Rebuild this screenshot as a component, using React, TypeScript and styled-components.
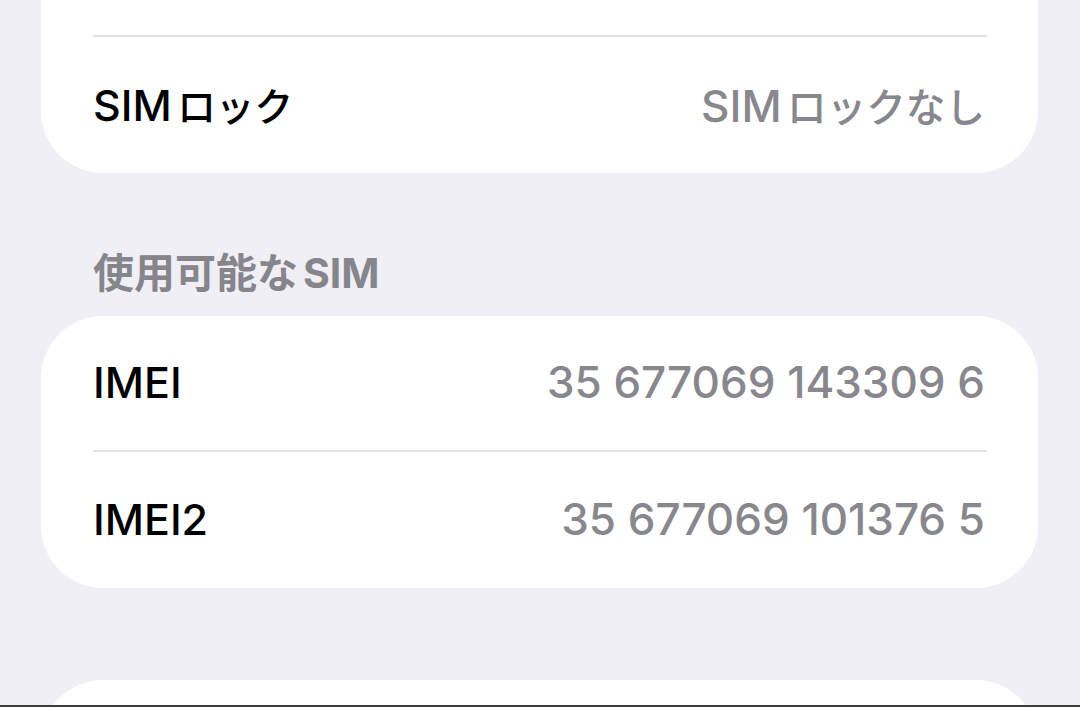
import styled, { createGlobalStyle } from 'styled-components';

const Colors = {
  BACKGROUND: '#f0eff5',
  CARD: '#ffffff',
  LABEL: '#000000',
  SECONDARY: '#88878d',
  HEADER: '#86858b',
  SEPARATOR: '#e2e2e5',
};

const FONT = `Inter, 'Noto Sans CJK JP', 'Noto Sans', sans-serif`;

const GlobalStyle = createGlobalStyle`
  html, body {
    margin: 0;
    padding: 0;
    background: ${Colors.BACKGROUND};
    overflow: hidden;
  }
  body {
    font-family: ${FONT};
    -webkit-font-smoothing: antialiased;
  }
`;

const Screen = styled.div`
  height: 707px;
  overflow: hidden;
  padding: 0 42px 0 41px;
  display: flex;
  flex-direction: column;
`;

const Group = styled.section<{ offsetTop?: number; spaceAfter?: number }>`
  background: ${Colors.CARD};
  border-radius: 62px;
  margin-top: ${({ offsetTop }) => (offsetTop ? `${offsetTop}px` : '0')};
  margin-bottom: ${({ spaceAfter }) => (spaceAfter ? `${spaceAfter}px` : '0')};
  flex-shrink: 0;
`;

const Row = styled.div<{ height?: number }>`
  height: ${({ height }) => height ?? 135}px;
  box-sizing: border-box;
  padding: 0 53px 2px 52px;
  display: flex;
  align-items: center;
  justify-content: space-between;
`;

const Separator = styled.div`
  height: 2px;
  margin: 0 51px 0 52px;
  background: ${Colors.SEPARATOR};
`;

const Label = styled.span`
  font-size: 43px;
  font-weight: 500;
  color: ${Colors.LABEL};
  white-space: nowrap;
`;

const Value = styled(Label)`
  font-size: 44px;
  color: ${Colors.SECONDARY};
`;

// kana runs look a touch smaller than the latin glyphs beside them
const Kana = styled.span`
  font-family: 'Noto Sans CJK JP', sans-serif;
  font-size: 0.9em;
  margin-left: 0.14em;
`;

const SectionHeader = styled.h2`
  flex-shrink: 0;
  height: 143px;
  box-sizing: border-box;
  margin: 0;
  padding: 0 52px 19px;
  display: flex;
  align-items: flex-end;
  font-size: 41px;
  line-height: 47px;
  font-weight: 700;
  color: ${Colors.HEADER};
  white-space: nowrap;
`;

const HeaderKana = styled.span`
  font-family: 'Noto Sans CJK JP', sans-serif;
  margin-right: 0.12em;
`;

const BottomEdge = styled.div`
  position: fixed;
  left: 0;
  right: 0;
  bottom: 0;
  height: 2px;
  background: #3b3b3d;
`;

const imeis = [
  { label: 'IMEI', value: '35 677069 143309 6' },
  { label: 'IMEI2', value: '35 677069 101376 5' },
];

export default function App() {
  return (
    <>
      <GlobalStyle />
      <Screen>
        <Group offsetTop={-100}>
          <Row height={135} />
          <Separator />
          <Row height={136}>
            <Label>
              SIM<Kana>ロック</Kana>
            </Label>
            <Value>
              SIM<Kana>ロックなし</Kana>
            </Value>
          </Row>
        </Group>

        <SectionHeader>
          <span>
            <HeaderKana>使用可能な</HeaderKana>SIM
          </span>
        </SectionHeader>

        <Group spaceAfter={92}>
          {imeis.map((item, i) => (
            <div key={item.label}>
              {i > 0 && <Separator />}
              <Row height={i > 0 ? 136 : 134}>
                <Label>{item.label}</Label>
                <Value>{item.value}</Value>
              </Row>
            </div>
          ))}
        </Group>

        <Group>
          <Row height={135} />
        </Group>
      </Screen>
      <BottomEdge />
    </>
  );
}
